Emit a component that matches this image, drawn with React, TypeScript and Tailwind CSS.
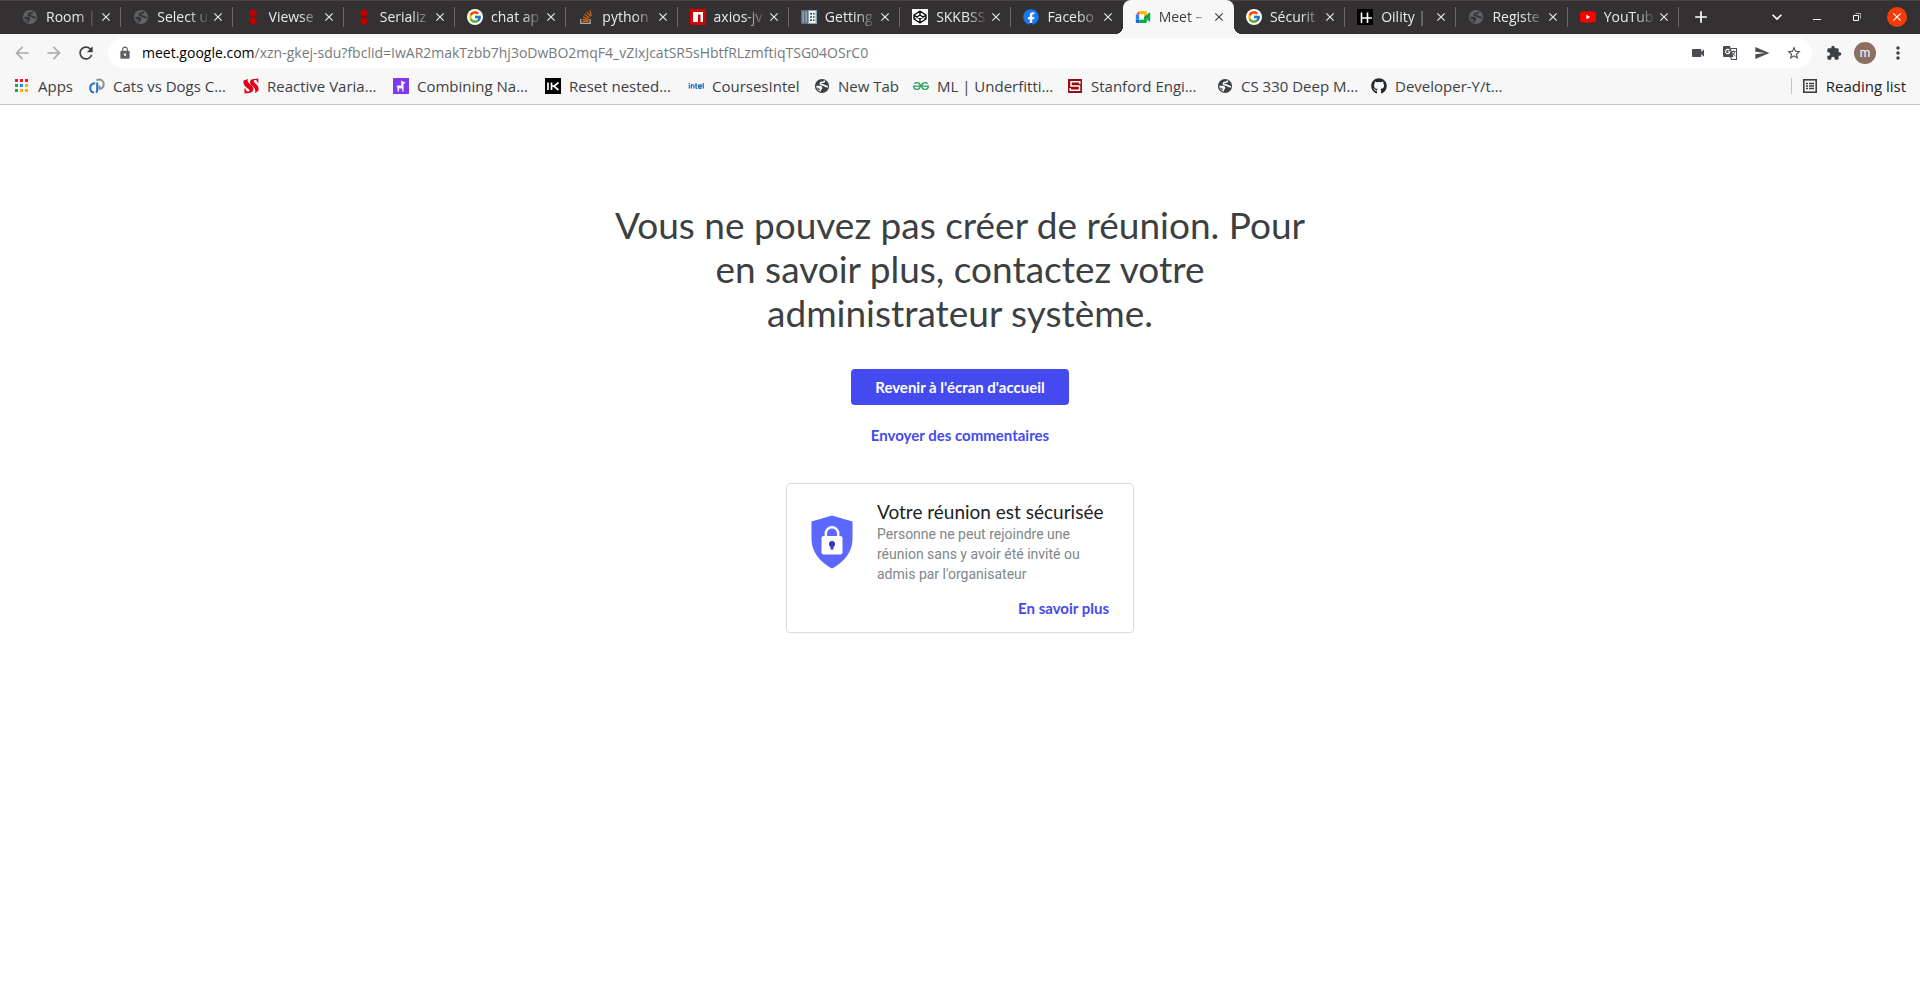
import type { ReactNode } from "react";
import { FcGoogle } from "react-icons/fc";
import { FaGithub, FaFacebook } from "react-icons/fa";
import {
  MdArrowBack,
  MdArrowForward,
  MdClose,
  MdExtension,
  MdLock,
  MdMoreVert,
  MdRefresh,
  MdSend,
  MdStarBorder,
  MdVideocam,
  MdAdd,
  MdKeyboardArrowDown,
} from "react-icons/md";
import { SiGeeksforgeeks } from "react-icons/si";

function Globe({ disc, land }: { disc: string; land: string }) {
  return (
    <svg viewBox="0 0 16 16" className="size-4" aria-hidden="true">
      <circle cx="8" cy="8" r="7.1" fill={disc} />
      <path
        d="M10.800 2.600C10.500 4 9.500 4.300 8.300 4.300 6.600 4.400 6 5.400 6.600 6.300c.6.800 2.400.3 3.400.9 1.300.8 1.800 1.600 3.900 1.400"
        fill="none"
        stroke={land}
        strokeWidth="1.700"
      />
      <path d="M2.200 7.700h3.600c1.600.2 2.700 1.200 2.500 2.500-.1 1-.9 1.200-1.300 1.700l-.3 1.800C4.200 13 2.300 11 2.200 7.700z" fill={land} />
      <path d="M2.900 9.200c.4 1.600 1.400 2.700 2.700 3.400l.2-1.700z" fill={disc} />
    </svg>
  );
}

const TabGlobe = () => <Globe disc="#5f6368" land="#333132" />;
const BarGlobe = () => <Globe disc="#3c4043" land="#f7f7f7" />;

function RedDots() {
  return (
    <svg viewBox="0 0 16 16" className="size-4" aria-hidden="true">
      <path d="M6.500 6h3v4h-3z" fill="#8a0000" />
      <circle cx="8" cy="4" r="3.600" fill="#bb0000" />
      <circle cx="8" cy="12" r="3.600" fill="#bb0000" />
    </svg>
  );
}

function GoogleBadge() {
  return (
    <span className="grid size-4 place-items-center rounded-full bg-white">
      <FcGoogle className="size-3.5" />
    </span>
  );
}

function StackIcon() {
  return (
    <svg viewBox="0 0 16 16" className="size-4" aria-hidden="true" fill="none">
      <path d="M2.700 10v4.400h9.400V10" stroke="#a9acaf" strokeWidth="1.300" />
      <path
        d="M4.400 12.400h6M4.500 10.200l5.900 1.100M5.100 7.800l5.500 2.400M6.500 5.200l4.700 3.700M8.900 3l3.600 4.700M12 1.300l1.200 5.600"
        stroke="#d9680f"
        strokeWidth="1.200"
      />
    </svg>
  );
}

function NpmIcon() {
  return (
    <svg viewBox="0 0 16 16" className="size-4" aria-hidden="true">
      <path d="M0 0h16v16H0z" fill="#d50000" />
      <path d="M3 3h10v10h-2.500V5.500H8V13H3z" fill="#fff" />
    </svg>
  );
}

function DocsIcon() {
  return (
    <svg viewBox="0 0 16 16" className="size-4" aria-hidden="true">
      <path d="M0 1h7v14H0z" fill="#5d7183" />
      <path d="M7 1h9v14H7z" fill="#8fa3b3" />
      <path d="M1.500 2.500H3v11H1.500zM4.500 2.500H6v11H4.500z" fill="#8fa3b3" />
      <path d="M8 2h6.500v12H8z" fill="#f2f5f7" />
      <path
        d="M9 4h2v1.500H9zM12 4h1.500v1.500H12zM9 7.200h2v1.500H9zM12 7.200h1.500v1.500H12zM9 10.500h2V12H9zM12 10.500h1.500V12H12z"
        fill="#33434f"
      />
    </svg>
  );
}

function CodepenIcon() {
  return (
    <svg viewBox="0 0 16 16" className="size-4" aria-hidden="true">
      <path d="M0 0h16v16H0z" fill="#fff" />
      <path
        d="M8 2.200 14 6v4l-6 3.800L2 10V6zM2 6l6 4 6-4M2 10l6-4 6 4M8 2.200V6M8 10v3.800"
        fill="none"
        stroke="#111"
        strokeWidth="1.400"
        strokeLinejoin="round"
      />
    </svg>
  );
}

function FacebookIcon() {
  return (
    <span className="grid size-4 place-items-center rounded-full bg-[radial-gradient(white_55%,transparent_56%)]">
      <FaFacebook className="size-4 text-[#1877f2]" />
    </span>
  );
}

function MeetIcon() {
  return (
    <svg viewBox="0 0 16 16" className="size-4" aria-hidden="true">
      <path d="M.8 5.600 4.400 2v3.600z" fill="#ea4335" />
      <path d="M.8 5.600h3.600v4.800H.8z" fill="#2684fc" />
      <path d="M.8 10.400h3.600V14H2a1.200 1.200 0 0 1-1.200-1.200z" fill="#0066da" />
      <path d="M4.400 2h6.200a1.200 1.200 0 0 1 1.200 1.200v2.700L9 8V5.600H4.400z" fill="#ffba00" />
      <path d="M4.400 10.400H9V8l2.800 2.200v2.600a1.200 1.200 0 0 1-1.200 1.200H4.400z" fill="#00ac47" />
      <path d="M4.400 5.600H9v4.800H4.400z" fill="#fff" />
      <path d="m9 8 2.800-2.200v4.400z" fill="#00832d" />
      <path d="m11.800 5.800 2.500-2.300c.4-.3.900 0 .9.400v8.200c0 .5-.5.700-.9.400l-2.500-2.200z" fill="#00ac47" />
    </svg>
  );
}

function OilityIcon() {
  return (
    <svg viewBox="0 0 16 16" className="size-4" aria-hidden="true">
      <path d="M0 0h16v16H0z" fill="#000" />
      <path d="M4.500 3.500V14M10.500 3.500V14M4.500 9H15" stroke="#fff" strokeWidth="1.600" />
    </svg>
  );
}

function YouTubeIcon() {
  return (
    <svg viewBox="0 0 16 16" className="size-4" aria-hidden="true">
      <rect y="2.500" width="16" height="11" rx="2.500" fill="#f00" />
      <path d="M6.400 5.800v4.400L10.200 8z" fill="#fff" />
    </svg>
  );
}

function AppsIcon() {
  const colors = ["#ea1c2c", "#ea1c2c", "#ea1c2c", "#1ea552", "#2a84fc", "#fbae08", "#1ea552", "#fbae08", "#fbae08"];
  return (
    <svg viewBox="0 0 16 16" className="size-4" aria-hidden="true">
      {colors.map((c, i) => (
        <rect key={i} x={1 + (i % 3) * 5} y={1 + Math.floor(i / 3) * 5} width="3" height="3" fill={c} />
      ))}
    </svg>
  );
}

function CatsIcon() {
  return (
    <svg viewBox="0 0 16 16" className="size-4" aria-hidden="true" fill="none" strokeWidth="2">
      <path d="M7.500 2.300C11.500.2 14.800 3 14.700 6.200c-.1 2.800-1.900 4.500-4.200 4.500V7.500" stroke="#8b8f94" />
      <path d="M6.200 5.200C3 5 1.200 7.400 1.200 9.800c0 2.500 1.600 4.500 3.800 4.800M6.800 14.600c1-.4 1.400-1.200 1.400-2.400V4.500" stroke="#1f6fd0" />
    </svg>
  );
}

function ReactiveIcon() {
  return (
    <svg viewBox="0 0 16 16" className="size-4" aria-hidden="true">
      <path
        d="M.5 2.500 5 1c-1 2 0 3.500 2.200 5.200C9.700 8.300 10.700 10 10.200 12c-.4 1.600-2 2.900-4.200 3L1.500 15.500V9.500l2.500 4c1.600.3 2.700 0 2.500-1.200C6.300 10.700 1 9 .5 5z"
        fill="#e2001a"
      />
      <path
        d="M15.500 12.500 12 15.300c.8-2.600.2-4.800-2-6.500C7.500 6.800 6.500 5 7.200 3.200 7.800 1.400 9.500 1 11.500 1l3.700-.5.300 5-2.200-3.300c-1.500-.3-2.700.1-2.500 1.300.3 1.600 4.500 3.300 4.700 6.500z"
        fill="#e2001a"
      />
    </svg>
  );
}

function LlamaIcon() {
  return (
    <svg viewBox="0 0 16 16" className="size-4" aria-hidden="true">
      <path d="M0 0h16v16H0z" fill="#7e3af2" />
      <path d="M8.200 2.500 9.300 3l1 .8 1.900.5v1.300h-1.700v7.900H9.200v-3H5.900v3H4.500v-4L3.500 9l.8-1.500h3.900z" fill="#fff" />
    </svg>
  );
}

function IkIcon() {
  return (
    <svg viewBox="0 0 16 16" className="size-4" aria-hidden="true">
      <path d="M0 0h16v16H0z" fill="#000" />
      <path d="M3 4.500V12M6.500 4.500V12M13.500 4.500 9 8.200l4.500 3.800M6.500 8.200H9" stroke="#fff" strokeWidth="1.700" fill="none" />
    </svg>
  );
}

function IntelIcon() {
  return (
    <svg viewBox="0 0 16 16" className="size-4" aria-hidden="true" fill="none" stroke="#1268b8" strokeWidth="1.200">
      <path d="M1.300 6.800v3.700M3.300 10.500V6.800h1c1.200 0 1.700.5 1.700 1.500v2.200M8 5.200v4.300c0 .7.300 1 1 1h.4M7 7h2.400M10.500 8.600h3c0-1.200-.5-1.900-1.500-1.900s-1.600.8-1.600 1.900.6 1.900 1.600 1.900c.6 0 1-.2 1.400-.5M15.200 5v5.500" />
      <path d="M1.300 5v.9" />
    </svg>
  );
}

function StanfordIcon() {
  return (
    <svg viewBox="0 0 16 16" className="size-4" aria-hidden="true">
      <path d="M1 1h14v14H1z" fill="#9b0b14" />
      <path d="M12.800 6V3.800H4v4.200h8.500v4.200H3.200V10" fill="none" stroke="#fff" strokeWidth="1.500" />
    </svg>
  );
}

function TranslateIcon() {
  return (
    <svg viewBox="0 0 16 16" className="size-4" aria-hidden="true">
      <path d="M2 1h6l3.500 11H2a1 1 0 0 1-1-1V2a1 1 0 0 1 1-1z" fill="#4a4d51" />
      <path d="M7.400 5.100a2.200 2.200 0 1 0 .5 1.800H5.800" fill="none" stroke="#fff" strokeWidth="1.100" />
      <path d="M9 3.500h5.500v11H9.700L8.500 12" fill="none" stroke="#4a4d51" strokeWidth="1.100" />
      <path d="M9.500 6.500h4M11.500 5.500v1M12.800 6.500c-.5 2-1.500 3-2.800 4M10.300 7.500c.6 1.400 1.700 2.400 3 3.300" fill="none" stroke="#4a4d51" />
    </svg>
  );
}

function ReadingListIcon() {
  return (
    <svg viewBox="0 0 16 16" className="size-4" aria-hidden="true" fill="none" stroke="#3c4043">
      <rect x="1.800" y="1.800" width="12.400" height="12.400" strokeWidth="1.600" />
      <path d="M4 5.500h2M4 8h2M4 10.500h2M7 5.500h5M7 8h5M7 10.500h5" strokeWidth="1.400" />
    </svg>
  );
}

function ShieldIcon() {
  return (
    <svg viewBox="0 0 42 54" className="h-[54px] w-[42px]" aria-hidden="true">
      <path d="M21 .5 41.500 6.500V24c0 12.500-8.500 23.500-20.500 29.500C9 47.500.5 36.500.5 24V6.500z" fill="#5b67ff" />
      <rect x="10.500" y="21" width="21" height="18.500" rx="2.200" fill="#fff" />
      <path d="M14.800 22v-3.500a6.200 6.200 0 0 1 12.400 0V22" fill="none" stroke="#fff" strokeWidth="2.400" />
      <circle cx="21" cy="29" r="3" fill="#2f31c4" />
      <path d="M19.500 30h3v4.500h-3z" fill="#2f31c4" />
    </svg>
  );
}

type Tab = { title: string; icon: ReactNode; state?: "active" | "before" };

const tabs: Tab[] = [
  { title: "Room |", icon: <TabGlobe /> },
  { title: "Select u", icon: <TabGlobe /> },
  { title: "Viewse", icon: <RedDots /> },
  { title: "Serializ", icon: <RedDots /> },
  { title: "chat ap", icon: <GoogleBadge /> },
  { title: "python", icon: <StackIcon /> },
  { title: "axios-jv", icon: <NpmIcon /> },
  { title: "Getting", icon: <DocsIcon /> },
  { title: "SKKBSS", icon: <CodepenIcon /> },
  { title: "Facebo", icon: <FacebookIcon />, state: "before" },
  { title: "Meet –", icon: <MeetIcon />, state: "active" },
  { title: "Sécurit", icon: <GoogleBadge /> },
  { title: "Oility |", icon: <OilityIcon /> },
  { title: "Registe", icon: <TabGlobe /> },
  { title: "YouTub", icon: <YouTubeIcon /> },
];

const bookmarks = [
  { label: "Apps", icon: <AppsIcon />, width: "w-[75px]" },
  { label: "Cats vs Dogs C…", icon: <CatsIcon />, width: "w-[154px]" },
  { label: "Reactive Varia…", icon: <ReactiveIcon />, width: "w-[150px]" },
  { label: "Combining Na…", icon: <LlamaIcon />, width: "w-[152px]" },
  { label: "Reset nested…", icon: <IkIcon />, width: "w-[143px]" },
  { label: "CoursesIntel", icon: <IntelIcon />, width: "w-[126px]" },
  { label: "New Tab", icon: <BarGlobe />, width: "w-[99px]" },
  { label: "ML | Underfitti…", icon: <SiGeeksforgeeks className="size-4 text-[#2fa35a]" />, width: "w-[154px]" },
  { label: "Stanford Engi…", icon: <StanfordIcon />, width: "w-[150px]" },
  { label: "CS 330 Deep M…", icon: <BarGlobe />, width: "w-[154px]" },
  { label: "Developer-Y/t…", icon: <FaGithub className="size-4 text-[#24292f]" />, width: "w-[154px]" },
];

function TabItem({ tab }: { tab: Tab }) {
  const active = tab.state === "active";
  return (
    <div
      className={
        active
          ? "relative flex h-[34px] min-w-0 flex-1 items-center rounded-t-lg bg-[#f7f7f7] pl-3 text-[#3c4043]"
          : "flex h-[34px] min-w-0 flex-1 items-center pl-3 text-[#e8eaed]"
      }
    >
      {active && (
        <>
          <span className="absolute bottom-0 -left-2 size-2 bg-[radial-gradient(circle_at_0_0,#333132_8px,#f7f7f7_8px)]" />
          <span className="absolute -right-2 bottom-0 size-2 bg-[radial-gradient(circle_at_100%_0,#333132_8px,#f7f7f7_8px)]" />
        </>
      )}
      <button type="button" className="flex min-w-0 flex-1 items-center gap-2 text-left">
        <span className="shrink-0">{tab.icon}</span>
        <span className="min-w-0 flex-1 overflow-hidden whitespace-nowrap [mask-image:linear-gradient(to_right,black_60%,transparent)]">
          {tab.title}
        </span>
      </button>
      <button type="button" aria-label="Close tab" className="mr-1.5 grid size-4 shrink-0 place-items-center">
        <MdClose className="size-3.5 stroke-current" />
      </button>
      <span className={active || tab.state === "before" ? "h-5 w-px" : "h-5 w-px bg-[#6a6869]"} />
    </div>
  );
}

export default function App() {
  return (
    <div className="min-h-screen bg-white font-['Open_Sans','Noto_Sans',sans-serif]">
      <header className="bg-[#f7f7f7]">
        <div className="flex h-[34px] items-center bg-[#333132] pl-[10px] text-sm shadow-[inset_0_1px_0_#454344]">
          <div className="flex min-w-0 flex-1">
            {tabs.map((tab) => (
              <TabItem key={tab.title} tab={tab} />
            ))}
          </div>
          <div className="flex w-[241px] shrink-0 items-center justify-between pr-[13px] pl-3 text-white">
            <button type="button" aria-label="New tab">
              <MdAdd className="size-5" />
            </button>
            <div className="flex items-center gap-5">
              <button type="button" aria-label="Search tabs">
                <MdKeyboardArrowDown className="size-5" />
              </button>
              <button type="button" aria-label="Minimize" className="grid size-5 place-items-center pt-1">
                <span className="h-px w-2 bg-white" />
              </button>
              <button type="button" aria-label="Restore" className="grid size-5 place-items-center">
                <svg viewBox="0 0 10 10" className="size-2.5" fill="none" stroke="white">
                  <path d="M1.500 3.500h5v5h-5z" />
                  <path d="M3.500 1.500h5v5" opacity=".6" />
                </svg>
              </button>
              <button type="button" aria-label="Close" className="grid size-5 place-items-center rounded-full bg-[#f63b0a]">
                <MdClose className="size-3.5" />
              </button>
            </div>
          </div>
        </div>

        <div className="flex h-[38px] items-center pr-3 pl-3">
          <div className="flex shrink-0 items-center gap-3">
            <button type="button" aria-label="Back" className="text-[#a9abad]">
              <MdArrowBack className="size-5" />
            </button>
            <button type="button" aria-label="Forward" className="text-[#a9abad]">
              <MdArrowForward className="size-5" />
            </button>
            <button type="button" aria-label="Reload" className="text-[#3c4043]">
              <MdRefresh className="size-5" />
            </button>
          </div>
          <div className="ml-3 flex h-[30px] flex-1 items-center rounded-full bg-white pr-2.5 pl-2.5">
            <MdLock className="size-3.5 shrink-0 text-[#5f6368]" />
            <div className="min-w-0 flex-1 truncate pl-2.5 text-sm text-[#76797c]">
              <span className="text-black">meet.google.com</span>
              /xzn-gkej-sdu?fbclid=IwAR2makTzbb7hj3oDwBO2mqF4_vZIxJcatSR5sHbtfRLzmftiqTSG04OSrC0
            </div>
            <div className="flex items-center gap-4 text-[#4a4d51]">
              <button type="button" aria-label="Camera">
                <MdVideocam className="size-4" />
              </button>
              <button type="button" aria-label="Translate">
                <TranslateIcon />
              </button>
              <button type="button" aria-label="Share">
                <MdSend className="size-4" />
              </button>
              <button type="button" aria-label="Bookmark">
                <MdStarBorder className="size-4" />
              </button>
            </div>
          </div>
          <div className="flex shrink-0 items-center gap-3 pl-3.5 text-[#3c4043]">
            <button type="button" aria-label="Extensions">
              <MdExtension className="size-4" />
            </button>
            <button
              type="button"
              className="grid size-[22px] place-items-center rounded-full bg-[#8d6e63] font-['Roboto',sans-serif] text-xs text-white"
            >
              m
            </button>
            <button type="button" aria-label="Menu">
              <MdMoreVert className="size-5" />
            </button>
          </div>
        </div>

        <div className="flex h-[33px] items-center border-b border-[#c4c4c4] pr-3.5 pb-1 pl-3.5 text-[15px] text-[#3c4043]">
          <nav className="flex min-w-0 flex-1 overflow-hidden">
            {bookmarks.map((b) => (
              <a key={b.label} href="#" className={`flex shrink-0 items-center gap-2 whitespace-nowrap ${b.width}`}>
                <span className="shrink-0">{b.icon}</span>
                {b.label}
              </a>
            ))}
          </nav>
          <button
            type="button"
            className="flex shrink-0 items-center gap-2 border-l border-[#c4c4c4] pl-2.5 leading-4 text-[#202124]"
          >
            <ReadingListIcon />
            Reading list
          </button>
        </div>
      </header>

      <main className="flex flex-col items-center px-4 pt-[98px] font-['Lato',sans-serif]">
        <h1 className="max-w-[720px] text-center text-[37px] leading-[44px] text-[#3c4043]">
          Vous ne pouvez pas créer de réunion. Pour
          <br />
          en savoir plus, contactez votre
          <br />
          administrateur système.
        </h1>
        <button type="button" className="mt-[34px] h-9 rounded bg-[#444aee] px-6 text-[15px] font-bold text-white">
          Revenir à l'écran d'accueil
        </button>
        <a href="#" className="mt-5 text-[15px] leading-5 font-bold text-[#444aee]">
          Envoyer des commentaires
        </a>
        <section className="mt-[38px] w-full max-w-[348px] rounded border border-[#dadce0] pt-4 pr-6 pb-3.5 pl-6">
          <div className="flex gap-6">
            <div className="shrink-0 pt-[15px]">
              <ShieldIcon />
            </div>
            <div>
              <h2 className="text-[19px] leading-6 text-[#202124]">Votre réunion est sécurisée</h2>
              <p className="font-['Roboto',sans-serif] text-sm leading-5 text-[#80868b]">
                Personne ne peut rejoindre une réunion sans y avoir été invité ou admis par l'organisateur
              </p>
            </div>
          </div>
          <a href="#" className="mt-[14px] block text-right text-[15px] leading-5 font-bold text-[#444aee]">
            En savoir plus
          </a>
        </section>
      </main>
    </div>
  );
}
